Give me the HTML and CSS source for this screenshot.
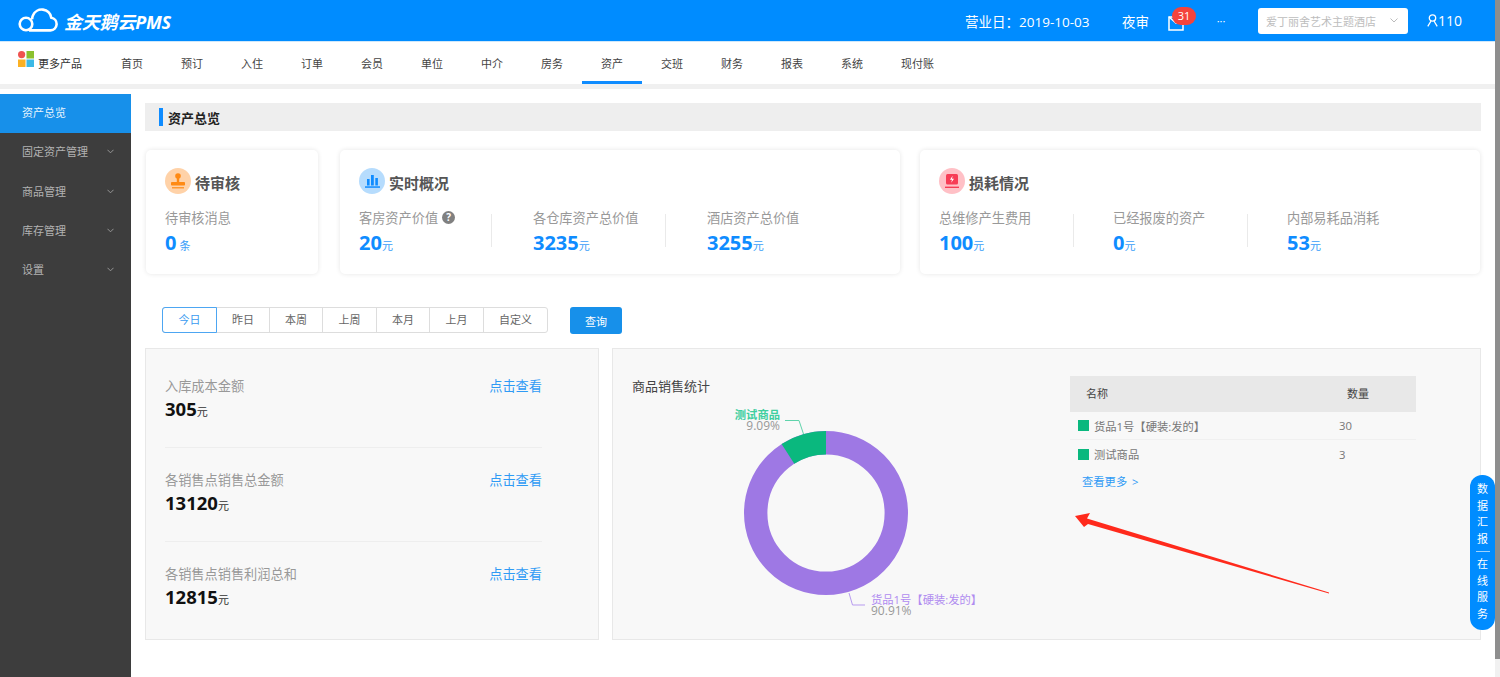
FILE: index.html
```html
<!DOCTYPE html>
<html lang="zh-CN">
<head>
<meta charset="utf-8">
<title>金天鹅云PMS</title>
<link rel="stylesheet" href="styles.css">
</head>
<body>
<div class="page">
  <div class="app">
    <header class="topbar">
      <svg class="logo-icon" width="40" height="26" viewBox="18 9 40 26" fill="none" stroke="#fff" stroke-width="2.6"><circle cx="26" cy="25" r="6.3"/><path d="M29 31.4H50.5a6.4 6.4 0 0 0 .8-12.7 9.6 9.6 0 0 0-18.3-2.4 8 8 0 0 0-.8 4"/></svg>
      <span class="logo-text">金天鹅云PMS</span>
      <span class="biz-date">营业日：2019-10-03</span>
      <span class="night">夜审</span>
      <span class="msg">
        <svg width="16" height="15" viewBox="0 0 16 15" fill="none" stroke="#fff" stroke-width="1.5"><path d="M1 1H15V14H1Z"/><path d="M1 1L8 7L15 1"/></svg>
        <span class="badge">31</span>
      </span>
      <span class="more">···</span>
      <span class="hotel"><span class="hotel-name">爱丁丽舍艺术主题酒店</span><svg width="8" height="5" viewBox="0 0 8 5" fill="none" stroke="#bbb"><path d="M.5 .5L4 4L7.5 .5"/></svg></span>
      <span class="user">
        <svg width="11" height="13" viewBox="0 0 11 13" fill="none" stroke="#fff" stroke-width="1.3"><circle cx="5.5" cy="4" r="3.2"/><path d="M4 7L.8 12.3M7 7L10.2 12.3"/></svg>
        <span>110</span>
      </span>
    </header>
    <nav class="navbar">
      <span class="more-products">
        <svg class="grid-icon" width="16" height="16" viewBox="0 0 16 16"><circle cx="3.6" cy="3.6" r="3.6" fill="#ef5350"/><rect x="8.5" width="7.5" height="7.5" fill="#8bc12e"/><rect y="8.5" width="7.5" height="7.5" fill="#fbb124"/><rect x="8.5" y="8.5" width="7.5" height="7.5" fill="#3db9e6"/></svg>
        更多产品
      </span>
      <a class="nav-item">首页</a><a class="nav-item">预订</a><a class="nav-item">入住</a><a class="nav-item">订单</a><a class="nav-item">会员</a><a class="nav-item">单位</a><a class="nav-item">中介</a><a class="nav-item">房务</a><a class="nav-item active">资产</a><a class="nav-item">交班</a><a class="nav-item">财务</a><a class="nav-item">报表</a><a class="nav-item">系统</a><a class="nav-item">现付账</a>
    </nav>
    <div class="band"></div>
    <div class="body">
      <aside class="sidebar">
        <div class="side-item active">资产总览</div>
        <div class="side-item">固定资产管理<svg class="chev" width="7" height="5" viewBox="0 0 8 5" fill="none" stroke="#999" stroke-width="1.1"><path d="M.5 .5L4 4L7.5 .5"/></svg></div>
        <div class="side-item">商品管理<svg class="chev" width="7" height="5" viewBox="0 0 8 5" fill="none" stroke="#999" stroke-width="1.1"><path d="M.5 .5L4 4L7.5 .5"/></svg></div>
        <div class="side-item">库存管理<svg class="chev" width="7" height="5" viewBox="0 0 8 5" fill="none" stroke="#999" stroke-width="1.1"><path d="M.5 .5L4 4L7.5 .5"/></svg></div>
        <div class="side-item">设置<svg class="chev" width="7" height="5" viewBox="0 0 8 5" fill="none" stroke="#999" stroke-width="1.1"><path d="M.5 .5L4 4L7.5 .5"/></svg></div>
      </aside>
      <main class="main">
        <div class="title-bar"><span class="title-mark"></span>资产总览</div>
        <section class="cards">
          <div class="card card-small">
            <div class="card-head">
              <span class="circle circle-orange"><svg width="16" height="17" viewBox="0 0 16 17" fill="#ff8a14"><circle cx="8" cy="3" r="2.8"/><rect x="6.8" y="4" width="2.4" height="6"/><rect x="1" y="9" width="14" height="3.6" rx=".8"/><rect x="2" y="14.2" width="12" height="1.2"/></svg></span>
              待审核
            </div>
            <div class="stats">
              <div class="stat"><div class="stat-label">待审核消息</div><div class="stat-value">0<small class="unit-gap">条</small></div></div>
            </div>
          </div>
          <div class="card card-wide">
            <div class="card-head">
              <span class="circle circle-blue"><svg width="15" height="14" viewBox="0 0 15 14" fill="#0f8cff"><rect x="2" y="5" width="2.6" height="6.5"/><rect x="6" y="1" width="2.8" height="10.5"/><rect x="10.3" y="4" width="2.6" height="7.5"/><rect y="12.3" width="15" height="1.5"/></svg></span>
              实时概况
            </div>
            <div class="stats">
              <div class="stat"><div class="stat-label">客房资产价值<span class="help">?</span></div><div class="stat-value">20<small>元</small></div></div>
              <span class="sep"></span>
              <div class="stat"><div class="stat-label">各仓库资产总价值</div><div class="stat-value">3235<small>元</small></div></div>
              <span class="sep"></span>
              <div class="stat"><div class="stat-label">酒店资产总价值</div><div class="stat-value">3255<small>元</small></div></div>
            </div>
          </div>
          <div class="card card-wide">
            <div class="card-head">
              <span class="circle circle-red"><svg width="14" height="15" viewBox="0 0 14 15"><rect x="1" y="0" width="12" height="10.5" rx="1.5" fill="#f73c55"/><path d="M7.6 1.8L5 5.8H7L6.2 8.8L9 4.8H7Z" fill="#fff"/><rect y="12.6" width="14" height="1.4" fill="#f73c55"/></svg></span>
              损耗情况
            </div>
            <div class="stats stats-alt">
              <div class="stat"><div class="stat-label">总维修产生费用</div><div class="stat-value">100<small>元</small></div></div>
              <span class="sep"></span>
              <div class="stat"><div class="stat-label">已经报废的资产</div><div class="stat-value">0<small>元</small></div></div>
              <span class="sep"></span>
              <div class="stat"><div class="stat-label">内部易耗品消耗</div><div class="stat-value">53<small>元</small></div></div>
            </div>
          </div>
        </section>
        <section class="filters">
          <div class="tabs">
            <span class="tab tab-on t55">今日</span><span class="tab t53">昨日</span><span class="tab t53">本周</span><span class="tab t54">上周</span><span class="tab t53">本月</span><span class="tab t54">上月</span><span class="tab t64">自定义</span>
          </div>
          <button class="query" type="button">查询</button>
        </section>
        <section class="panels">
          <div class="panel panel-left">
            <div class="metric">
              <div class="metric-text"><div class="metric-label">入库成本金额</div><div class="metric-value">305<small>元</small></div></div>
              <a class="metric-link">点击查看</a>
            </div>
            <div class="metric">
              <div class="metric-text"><div class="metric-label">各销售点销售总金额</div><div class="metric-value">13120<small>元</small></div></div>
              <a class="metric-link">点击查看</a>
            </div>
            <div class="metric">
              <div class="metric-text"><div class="metric-label">各销售点销售利润总和</div><div class="metric-value">12815<small>元</small></div></div>
              <a class="metric-link">点击查看</a>
            </div>
          </div>
          <div class="panel panel-right">
            <div class="chart">
              <div class="chart-title">商品销售统计</div>
              <svg class="donut" width="438" height="233" viewBox="632 397 438 233">
                <circle cx="826" cy="513" r="70.3" fill="none" stroke="#9e78e4" stroke-width="23.4"/>
                <path d="M826 431A82 82 0 0 0 781.6 444L794.3 463.8A58.6 58.6 0 0 1 826 454.4Z" fill="#0ab87e"/>
                <path d="M785 420.5H799L803.5 434" fill="none" stroke="#5fd3ab" stroke-width="1"/>
                <path d="M849 593L852.5 605H865" fill="none" stroke="#b79bef" stroke-width="1"/>
                <text class="lbl lbl-green" x="780" y="419" text-anchor="end">测试商品</text>
                <text class="lbl lbl-gray" x="780" y="430" text-anchor="end">9.09%</text>
                <text class="lbl lbl-purple" x="871" y="604">货品1号【硬装:发的】</text>
                <text class="lbl lbl-gray" x="871" y="615">90.91%</text>
              </svg>
            </div>
            <div class="goods">
              <div class="goods-head"><span>名称</span><span class="goods-qty-h">数量</span></div>
              <div class="goods-row goods-row-line"><span class="swatch"></span><span class="goods-name">货品1号【硬装:发的】</span><span class="goods-qty">30</span></div>
              <div class="goods-row"><span class="swatch"></span><span class="goods-name">测试商品</span><span class="goods-qty">3</span></div>
              <a class="goods-more">查看更多 &gt;</a>
            </div>
            <svg class="arrow" width="260" height="84" viewBox="1072 511 260 84"><polygon points="1075,516 1090,513 1087,518.5 1329,592.5 1329,593.5 1088,524 1084,527" fill="#ff2a1c"/></svg>
          </div>
        </section>
      </main>
    </div>
    <aside class="float-pill">
      <span>数</span><span>据</span><span>汇</span><span>报</span>
      <i class="pill-line"></i>
      <span>在</span><span>线</span><span>服</span><span>务</span>
    </aside>
  </div>
  <div class="scrollbar"><div class="thumb"></div></div>
</div>
</body>
</html>
```

FILE: styles.css
```css
* { box-sizing: border-box; }
html, body { margin: 0; padding: 0; height: 677px; overflow: hidden; }
body { font-family: "Open Sans", "Noto Sans CJK SC", sans-serif; font-size: 12px; color: #333; background: #fff; }
a { text-decoration: none; }

.page { display: flex; height: 677px; }
.app { position: relative; width: 1495px; display: flex; flex-direction: column; height: 677px; overflow: hidden; }
.scrollbar { width: 5px; background: #f1f1f1; }
.thumb { height: 659px; background: #8e8e8e; }

/* top bar */
.topbar { flex: none; height: 42px; background: #008cff; color: #fff; display: flex; align-items: center; border-bottom: 1px solid #cfe8fb; }
.logo-icon { margin-left: 18px; }
.logo-text { margin-left: 6px; font-size: 18px; font-weight: 700; font-style: italic; width: 110px; white-space: nowrap; letter-spacing: -0.2px; }
.biz-date { margin-left: 791px; font-size: 13.5px; width: 157px; white-space: nowrap; }
.night { font-size: 13.5px; width: 46px; }
.msg { position: relative; width: 45px; height: 15px; display: block; margin-top: 6px; }
.msg svg { display: block; }
.badge { position: absolute; left: 4px; top: -9px; width: 24px; height: 18px; border-radius: 9px; background: #f4433c; font-size: 11px; line-height: 17px; text-align: center; }
.more { width: 36px; font-size: 11px; line-height: 1; text-align: center; margin: 0 19px 0 -10px; }
.hotel { width: 150px; height: 26px; background: #fff; border-radius: 3px; display: flex; align-items: center; justify-content: space-between; padding: 0 10px 0 8px; }
.hotel-name { font-size: 11px; color: #bdbdbd; white-space: nowrap; }
.user { margin-left: 19px; display: flex; align-items: center; font-size: 14px; }

/* nav */
.navbar { flex: none; height: 42px; display: flex; align-items: stretch; padding-left: 18px; background: #fff; }
.more-products { position: relative; width: 84px; padding-left: 20px; line-height: 44px; font-size: 11px; white-space: nowrap; color: #333; }
.grid-icon { position: absolute; left: 0; top: 9px; }
.nav-item { width: 60px; padding-left: 19px; font-size: 11px; line-height: 44px; color: #444; white-space: nowrap; }
.nav-item.active { border-bottom: 3px solid #0f8cff; }

.band { flex: none; height: 5px; background: #f0f0f0; }

/* body */
.body { flex: 1; display: flex; margin-top: 5px; min-height: 0; }
.sidebar { flex: none; width: 131px; background: #3d3d3d; }
.side-item { position: relative; height: 39.3px; line-height: 38.4px; padding-left: 22px; font-size: 11px; color: #b2b2b2; white-space: nowrap; }
.side-item.active { background: #1790ea; color: #e8f4fd; }
.chev { position: absolute; left: 107px; top: 16px; }

.main { flex: 1; min-width: 0; padding: 9px 14px 0; }
.title-bar { height: 28px; background: #eee; display: flex; align-items: center; padding-left: 14px; font-size: 13px; font-weight: 700; color: #222; }
.title-mark { width: 4px; height: 18px; background: #0f8cff; margin-right: 5px; }

/* cards */
.cards { display: flex; margin: 19px 0 0 1px; }
.card { flex: none; height: 124px; background: #fff; border-radius: 5px; box-shadow: 0 0 5px rgba(0, 0, 0, .1); padding: 19px 19px 0; }
.card-small { width: 172px; margin-right: 22px; }
.card-wide { width: 560px; margin-right: 20px; }
.card-wide:last-child { margin-right: 0; }
.card-head { display: flex; align-items: center; height: 26px; font-size: 15px; font-weight: 700; color: #555; }
.circle { width: 26px; height: 26px; margin-top: -2px; border-radius: 50%; margin-right: 4px; display: flex; align-items: center; justify-content: center; }
.circle-orange { background: #ffd2a8; }
.circle-blue { background: #b6dcfd; }
.circle-red { background: #ffc0c6; }
.stats { display: flex; margin-top: 12px; }
.stat { width: 132px; }
.sep { flex: none; width: 1px; height: 33px; margin: 7px 41px 0 0; background: #eaeaea; }
.stats-alt .stat { width: 134px; }
.stats-alt .sep { margin-right: 39px; }
.stat-label { display: flex; align-items: center; height: 20px; font-size: 13.2px; color: #999; white-space: nowrap; }
.help { width: 13px; height: 13px; margin-left: 4px; border-radius: 50%; background: #808080; color: #fff; font-size: 10px; font-weight: 700; line-height: 13px; text-align: center; }
.stat-value { margin-top: 4px; height: 24px; line-height: 24px; font-size: 20px; font-weight: 700; color: #0f8cff; white-space: nowrap; }
.stat-value small { font-size: 11px; font-weight: 400; color: #3a9ef8; }
.stat-value .unit-gap { margin-left: 3px; }

/* filters */
.filters { display: flex; margin: 33px 0 0 17px; }
.tabs { display: flex; height: 26px; border: 1px solid #ddd; border-radius: 3px; }
.tab { font-size: 11px; line-height: 24px; text-align: center; color: #666; border-right: 1px solid #ddd; }
.tab:last-child { border-right: 0; }
.t55 { width: 54px; }
.t53 { width: 53px; }
.t54 { width: 54px; }
.t64 { width: 63px; }
.tab-on { color: #3a9bf0; height: 26px; line-height: 24px; margin: -1px 0 0 -1px; width: 55px; border: 1px solid #4da6f2; border-radius: 3px 0 0 3px; }
.query { margin-left: 22px; width: 52px; height: 27px; padding: 0; border: 0; border-radius: 3px; background: #1790ea; color: #fff; font: inherit; font-size: 11px; }

/* panels */
.panels { display: flex; gap: 13px; margin-top: 14px; }
.panel { height: 292px; background: #f8f8f8; border: 1px solid #e8e8e8; }
.panel-left { width: 454px; padding: 5px 56px 0 19px; }
.metric { display: flex; justify-content: space-between; height: 94px; padding-top: 22px; border-bottom: 1px solid #eee; }
.metric:last-child { border-bottom: 0; }
.metric-label { height: 20px; line-height: 20px; font-size: 13.2px; color: #999; white-space: nowrap; }
.metric-value { height: 26px; line-height: 26px; font-size: 18.5px; font-weight: 700; color: #111; }
.metric-value small { font-size: 11px; font-weight: 400; color: #333; }
.metric-link { font-size: 13.2px; line-height: 20px; color: #2f9bf5; white-space: nowrap; }

.panel-right { position: relative; flex: 1; display: flex; padding: 27px 0 0 19px; }
.chart { width: 438px; flex: none; }
.chart-title { height: 22px; line-height: 20px; font-size: 13px; color: #444; white-space: nowrap; }
.donut { display: block; margin-top: -1px; }
.lbl { font-family: "Open Sans", "Noto Sans CJK SC", sans-serif; font-size: 11.3px; }
.lbl-green { fill: #3fcf9f; font-weight: 700; }
.lbl-purple { fill: #b08cf0; }
.lbl-gray { fill: #999; font-size: 12px; }

.goods { width: 346px; flex: none; }
.goods-head { display: flex; height: 36px; line-height: 36px; padding-left: 16px; background: #e8e8e8; font-size: 11px; color: #444; }
.goods-head span:first-child { width: 261px; }
.goods-row { display: flex; align-items: center; height: 28px; padding-left: 8px; font-size: 11.3px; color: #777; white-space: nowrap; }
.goods-row-line { border-bottom: 1px solid #f0f0f0; }
.swatch { width: 11px; height: 11px; margin-right: 5px; background: #0ab87e; }
.goods-name { width: 245px; }
.goods-more { display: block; margin: 6px 0 0 12px; font-size: 11.3px; word-spacing: 2px; line-height: 16px; color: #2f9bf5; }
.arrow { position: absolute; left: 459px; top: 162px; }

.float-pill { position: absolute; left: 1470px; top: 475px; width: 25px; height: 155px; border-radius: 12px; background: #008cff; color: #fff; font-size: 11px; display: flex; flex-direction: column; align-items: center; padding-top: 6px; }
.float-pill span { height: 16.5px; line-height: 16.5px; }
.pill-line { width: 14px; height: 1px; margin: 4px 0 4px; background: #9fd2fb; }
```
